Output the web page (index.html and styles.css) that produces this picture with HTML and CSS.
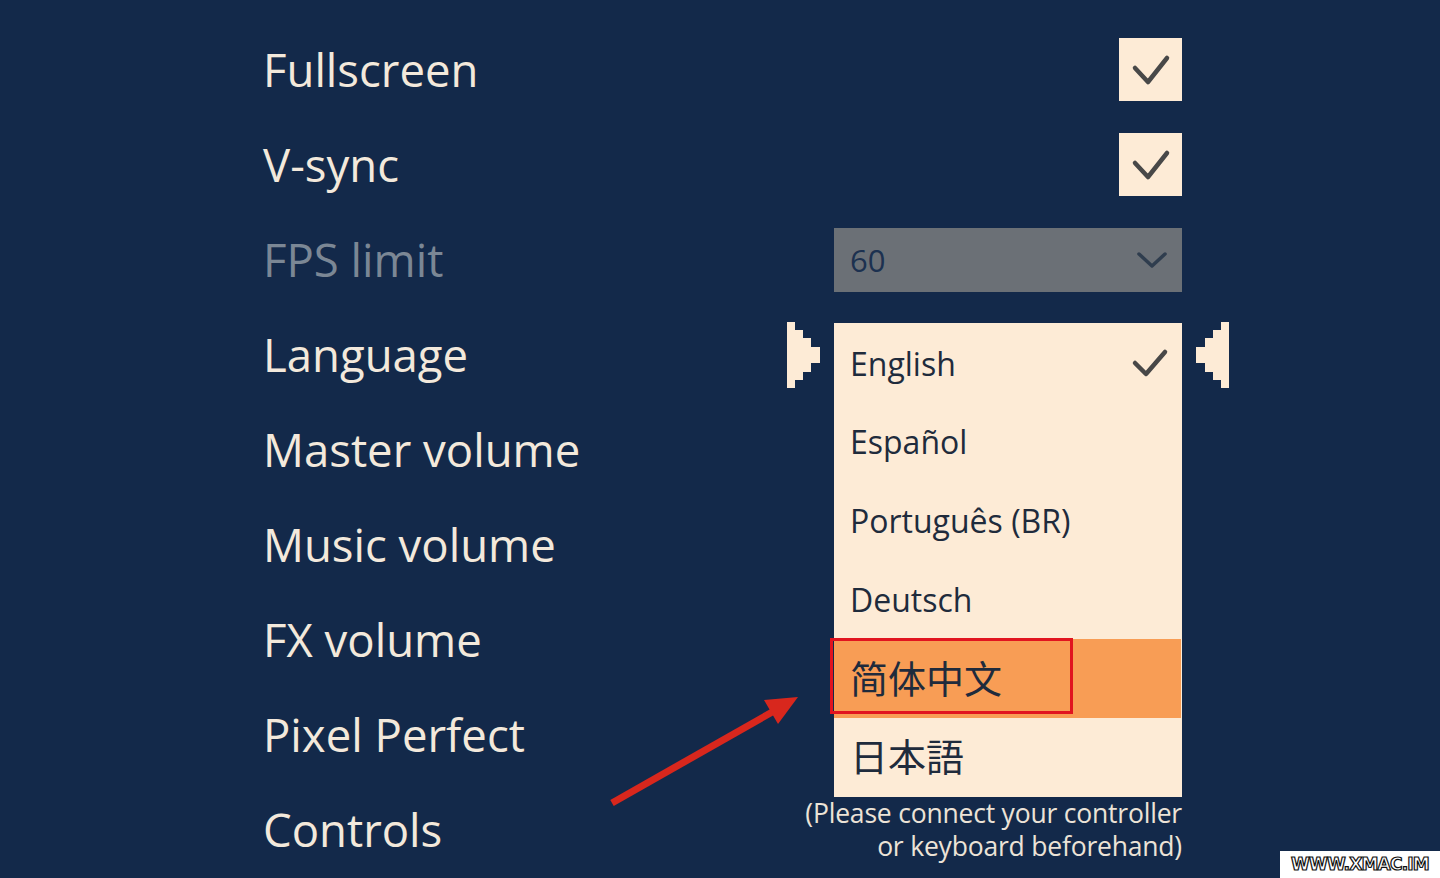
FILE: index.html
```html
<!DOCTYPE html>
<html lang="en">
<head>
    <meta charset="UTF-8">
    <meta name="viewport" content="width=device-width, initial-scale=1.0">
    <title>Settings</title>
    <link rel="stylesheet" href="styles.css">
</head>
<body>
    <main class="settings">
        <div class="row">
            <span class="label">Fullscreen</span>
            <span class="checkbox">
                <svg viewBox="0 0 63 63" width="63" height="63"><polyline points="16,30 29,44 48,20" /></svg>
            </span>
        </div>
        <div class="row">
            <span class="label">V-sync</span>
            <span class="checkbox">
                <svg viewBox="0 0 63 63" width="63" height="63"><polyline points="16,30 29,44 48,20" /></svg>
            </span>
        </div>
        <div class="row">
            <span class="label label-disabled">FPS limit</span>
            <div class="select select-disabled">
                <span>60</span>
                <svg class="chevron" viewBox="0 0 32 18" width="32" height="18"><polyline points="3,3 16,15 29,3" /></svg>
            </div>
        </div>
        <div class="row">
            <span class="label">Language</span>
            <div class="picker">
                <svg class="pixel-arrow" viewBox="0 0 33 66" width="33" height="66"><polygon points="0,0 8,0 8,8 16,8 16,16 24,16 24,25 33,25 33,41 24,41 24,50 16,50 16,58 8,58 8,66 0,66" /></svg>
                <div class="select-wrap">
                    <ul class="dropdown">
                        <li class="option">English
                            <svg class="tick" viewBox="0 0 40 34" width="40" height="34"><polyline points="5,17 16,28 35,6" /></svg>
                        </li>
                        <li class="option">Español</li>
                        <li class="option">Português (BR)</li>
                        <li class="option">Deutsch</li>
                        <li class="option option-active cjk-sc"><span class="marker">简体中文</span></li>
                        <li class="option cjk-jp">日本語</li>
                    </ul>
                </div>
                <svg class="pixel-arrow" viewBox="0 0 33 66" width="33" height="66"><polygon points="33,0 25,0 25,8 17,8 17,16 9,16 9,25 0,25 0,41 9,41 9,50 17,50 17,58 25,58 25,66 33,66" /></svg>
            </div>
        </div>
        <div class="row">
            <span class="label">Master volume</span>
        </div>
        <div class="row">
            <span class="label">Music volume</span>
        </div>
        <div class="row">
            <span class="label">FX volume</span>
        </div>
        <div class="row">
            <span class="label">Pixel Perfect</span>
        </div>
        <div class="row">
            <span class="label">Controls</span>
            <p class="note">(Please connect your controller<br>or keyboard beforehand)</p>
        </div>
    </main>

    <svg class="pointer" viewBox="0 0 210 120" width="210" height="120">
        <line x1="12" y1="113" x2="174" y2="21" />
        <polygon points="198,7 178,34 164,10" />
    </svg>

    <div class="watermark">WWW.XMAC.IM</div>
</body>
</html>
```

FILE: styles.css
```css
body {
    margin: 0;
    padding: 0;
    height: 878px;
    overflow: hidden;
    background-color: #13294a;
    font-family: "Open Sans", "Noto Sans", sans-serif;
    color: #f3e9dc;
    position: relative;
}
.settings {
    margin-left: 263px;
    width: 919px;
    padding-top: 22px;
}
.row {
    height: 95px;
    display: flex;
    align-items: center;
    justify-content: space-between;
}
.label {
    font-size: 45.5px;
    line-height: 1;
}
.label-disabled {
    color: #7b8795;
}
.checkbox {
    width: 63px;
    height: 63px;
    background-color: #fdebd6;
    display: block;
}
.checkbox svg {
    display: block;
}
.checkbox polyline,
.tick polyline {
    fill: none;
    stroke: #484848;
    stroke-width: 4.5;
    stroke-linecap: round;
    stroke-linejoin: round;
}
.select {
    width: 348px;
    height: 64px;
    box-sizing: border-box;
    padding: 0 14px 0 16px;
    display: flex;
    align-items: center;
    justify-content: space-between;
    font-size: 31px;
}
.select-disabled {
    background-color: #6b7076;
    color: #1c3150;
}
.chevron polyline {
    fill: none;
    stroke: #2f3d4e;
    stroke-width: 3.5;
    stroke-linecap: round;
    stroke-linejoin: round;
}
.picker {
    display: flex;
    align-items: center;
    gap: 14px;
    margin-right: -47px;
}
.pixel-arrow {
    display: block;
    fill: #fdebd6;
}
.select-wrap {
    width: 348px;
    height: 64px;
    position: relative;
}
.dropdown {
    position: absolute;
    top: 0;
    left: 0;
    width: 348px;
    margin: 0;
    padding: 0;
    list-style: none;
    background-color: #fdebd6;
    z-index: 2;
}
.option {
    height: 79px;
    box-sizing: border-box;
    padding: 0 12px 0 16px;
    display: flex;
    align-items: center;
    justify-content: space-between;
    font-size: 32px;
    color: #1f2b3c;
}
.option:first-child {
    padding-top: 2px;
}
.option-active {
    background-color: #f89d55;
    margin-right: 1px;
}
.cjk-sc {
    font-family: "Noto Sans CJK SC", sans-serif;
    font-size: 38px;
}
.cjk-jp {
    font-family: "Noto Sans CJK JP", sans-serif;
    font-size: 38px;
    padding-bottom: 5px;
}
.marker {
    display: flex;
    align-items: center;
    height: 70px;
    width: 220px;
    margin-left: -20px;
    padding-left: 17px;
    border: 3px solid #e1141f;
    margin-top: -4px;
}
.note {
    margin: 0;
    font-size: 26.5px;
    line-height: 33px;
    text-align: right;
    color: #ece3d7;
    letter-spacing: -0.2px;
}
.pointer {
    position: absolute;
    left: 600px;
    top: 690px;
}
.pointer line {
    stroke: #d8271d;
    stroke-width: 7;
}
.pointer polygon {
    fill: #d8271d;
}
.watermark {
    position: absolute;
    left: 1280px;
    top: 851px;
    width: 160px;
    height: 27px;
    background-color: #fff;
    font-family: "DejaVu Sans", sans-serif;
    font-weight: bold;
    font-size: 17px;
    line-height: 27px;
    text-align: center;
    color: #fff;
    -webkit-text-stroke: 1.2px #111;
    letter-spacing: -0.8px;
}
```
